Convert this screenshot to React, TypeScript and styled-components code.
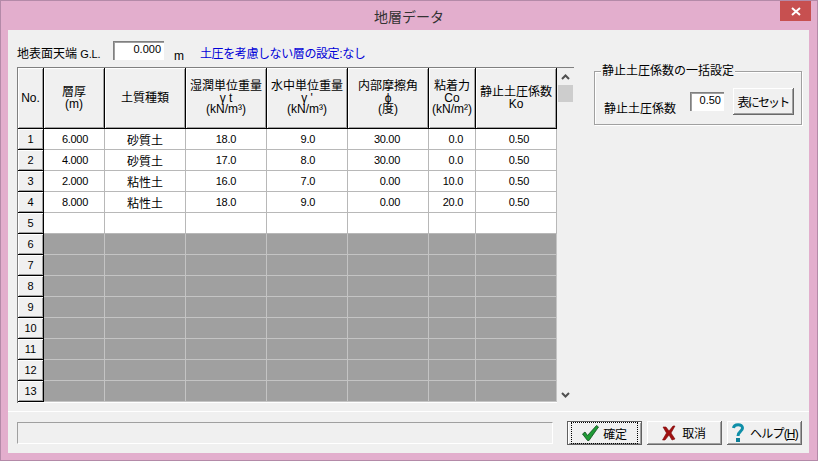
import { FC, Fragment } from 'react'
import styled, { createGlobalStyle } from 'styled-components'

const FONT = `"Liberation Sans", "Noto Sans CJK JP", sans-serif`

type Column = {
  width: number
  title: string[]
  alignRight?: number
}

const COLUMNS: Column[] = [
  { width: 61, title: ['層厚', '(m)'], alignRight: 16 },
  { width: 81, title: ['土質種類'] },
  { width: 81, title: ['湿潤単位重量', 'γ t', '(kN/m³)'], alignRight: 30 },
  { width: 81, title: ['水中単位重量', "γ '", '(kN/m³)'], alignRight: 32 },
  { width: 81, title: ['内部摩擦角', 'ϕ', '(度)'], alignRight: 28 },
  { width: 47, title: ['粘着力', 'Co', '(kN/m²)'], alignRight: 12 },
  { width: 81, title: ['静止土圧係数', 'Ko'], alignRight: 27 },
]

const ROWS: string[][] = [
  ['6.000', '砂質土', '18.0', '9.0', '30.00', '0.0', '0.50'],
  ['4.000', '砂質土', '17.0', '8.0', '30.00', '0.0', '0.50'],
  ['2.000', '粘性土', '16.0', '7.0', '0.00', '10.0', '0.50'],
  ['8.000', '粘性土', '18.0', '9.0', '0.00', '20.0', '0.50'],
  ['', '', '', '', '', '', ''],
]

const TOTAL_ROWS = 13

const CheckIcon: FC = () => (
  <svg width="17" height="16" viewBox="0 0 17 16">
    <path d="M0.5 9l2.5-2 2.5 3.5L14.5 0.5l2 1.5-9.5 13.5H5.5z" fill="#1f9a35" stroke="#0c4a1a" strokeWidth="0.8" />
  </svg>
)

const CrossIcon: FC = () => (
  <svg width="14" height="16" viewBox="0 0 14 16">
    <path d="M1 2h3l3 4 4-5h2l-4 7 4 6-3 1-3-5-4 5H0.5l4-7z" fill="#a01010" stroke="#7c0808" strokeWidth="0.6" />
  </svg>
)

const HelpIcon: FC = () => (
  <svg width="12" height="19" viewBox="0 0 12 19">
    <path d="M1.5 5C2 0.5 10.5 0.5 10.5 5c0 3.5-4.5 3.5-4.5 8" fill="none" stroke="#0f8fa8" strokeWidth="3" />
    <rect x="4" y="15" width="4" height="4" fill="#0f7f98" />
  </svg>
)

const App: FC = () => (
  <Window>
    <GlobalStyle />
    <TitleBar>
      地層データ
      <CloseButton>
        <svg width="10" height="9" viewBox="0 0 10 9">
          <path d="M1 1l8 7M9 1l-8 7" stroke="#fff" strokeWidth="2" />
        </svg>
      </CloseButton>
    </TitleBar>
    <Client>
      <TopRow>
        <TopLabel>
          地表面天端 <SmallLatin>G.L.</SmallLatin>
        </TopLabel>
        <TopInput>0.000</TopInput>
        <Unit>m</Unit>
        <Notice>土圧を考慮しない層の設定:なし</Notice>
      </TopRow>
      <Body>
        <GridFrame>
          <Grid>
            <NoHeader>No.</NoHeader>
            {COLUMNS.map((c) => (
              <HeaderCell key={c.title[0]} $width={c.width}>
                <HeaderText>
                  {c.title.map((t, i) => (
                    <Fragment key={t}>
                      {i > 0 && <br />}
                      {t}
                    </Fragment>
                  ))}
                </HeaderText>
              </HeaderCell>
            ))}
            {Array.from({ length: TOTAL_ROWS }, (_, r) => (
              <Row key={r}>
                <RowNo>{r + 1}</RowNo>
                {COLUMNS.map((c, i) => (
                  <Cell
                    key={c.title[0]}
                    $width={c.width}
                    $disabled={r >= ROWS.length}
                    $right={c.alignRight}
                  >
                    {ROWS[r]?.[i]}
                  </Cell>
                ))}
              </Row>
            ))}
          </Grid>
          <ScrollBar>
            <ScrollButton>
              <svg width="9" height="6" viewBox="0 0 9 6">
                <path d="M1 5l3.5-3.5L8 5" fill="none" stroke="#505050" strokeWidth="2" />
              </svg>
            </ScrollButton>
            <ScrollThumb />
            <ScrollTrack />
            <ScrollButton>
              <svg width="9" height="6" viewBox="0 0 9 6">
                <path d="M1 1l3.5 3.5L8 1" fill="none" stroke="#505050" strokeWidth="2" />
              </svg>
            </ScrollButton>
          </ScrollBar>
        </GridFrame>
        <GroupBox>
          <GroupLegend>静止土圧係数の一括設定</GroupLegend>
          <GroupLabel>静止土圧係数</GroupLabel>
          <GroupInput>0.50</GroupInput>
          <SetButton>表にセット</SetButton>
        </GroupBox>
      </Body>
      <Footer>
        <StatusBox />
        <Buttons>
          <Button $focused>
            <FocusRing>
              <CheckIcon />
              <ButtonText>確定</ButtonText>
            </FocusRing>
          </Button>
          <Button>
            <CrossIcon />
            <ButtonText>取消</ButtonText>
          </Button>
          <Button>
            <HelpIcon />
            <HelpText>
              ヘルプ(<u>H</u>)
            </HelpText>
          </Button>
        </Buttons>
      </Footer>
    </Client>
  </Window>
)

const GlobalStyle = createGlobalStyle`
  html, body {
    margin: 0;
    padding: 0;
    background: #e3aecd;
  }
  * {
    box-sizing: border-box;
  }
`

const Window = styled.div`
  display: flex;
  flex-direction: column;
  width: 818px;
  height: 461px;
  background: #e3aecd;
  border: 1px solid #b48aa8;
  font-family: ${FONT};
  font-size: 12px;
  color: #000;
`

const TitleBar = styled.div`
  position: relative;
  height: 29px;
  flex: none;
  display: flex;
  align-items: center;
  justify-content: center;
  font-size: 14px;
  color: #333;
`

const CloseButton = styled.div`
  position: absolute;
  top: 0;
  right: 6px;
  width: 31px;
  height: 20px;
  display: flex;
  align-items: center;
  justify-content: center;
  background: #c75050;
`

const Client = styled.div`
  flex: 1;
  margin: 0 8px 7px 7px;
  display: flex;
  flex-direction: column;
  background: #f0f0f0;
  padding: 10px 7px 8px 9px;
`

const TopRow = styled.div`
  display: flex;
  align-items: center;
  height: 20px;
`

const TopLabel = styled.span`
  width: 96px;
  padding-top: 5px;
  white-space: nowrap;
`

const SmallLatin = styled.span`
  font-size: 11px;
  letter-spacing: -0.2px;
`

const TopInput = styled.div`
  width: 51px;
  height: 19px;
  background: #fff;
  border-top: 1px solid #808080;
  border-left: 1px solid #808080;
  box-shadow: inset 1px 1px 0 #a0a0a0;
  font-size: 11px;
  text-align: right;
  padding: 1px 3px 0 0;
`

const Unit = styled.span`
  margin-left: 10px;
  padding-top: 11px;
  font-size: 12px;
`

const Notice = styled.span`
  margin-left: 16px;
  padding-top: 4px;
  color: #0000d8;
  letter-spacing: -0.4px;
`

const Body = styled.div`
  display: flex;
  align-items: flex-start;
  margin-top: 7px;
`

const GridFrame = styled.div`
  display: flex;
  width: 557px;
  height: 336px;
  overflow: hidden;
  background: #fff;
  border-top: 1px solid #808080;
  border-left: 1px solid #808080;
`

const Grid = styled.div`
  width: 539px;
  display: flex;
  flex-wrap: wrap;
  align-content: flex-start;
  background: #fff;
`

const NoHeader = styled.div`
  width: 26px;
  height: 61px;
  display: flex;
  align-items: center;
  justify-content: center;
  background: #f0f0f0;
  border-right: 1px solid #000;
  border-bottom: 1px solid #000;
  box-shadow: inset 1px 1px 0 #fff, inset -1px -1px 0 #a0a0a0;
`

const HeaderCell = styled.div<{ $width: number }>`
  width: ${(p) => p.$width}px;
  height: 61px;
  display: flex;
  justify-content: center;
  align-items: center;
  background: #f0f0f0;
  border-right: 1px solid #000;
  border-bottom: 1px solid #000;
  box-shadow: inset 1px 1px 0 #fff, inset -1px -1px 0 #a0a0a0;
  padding-top: 1px;
`

const HeaderText = styled.div`
  line-height: 11.6px;
  text-align: center;
  white-space: nowrap;
  font-size: 12px;
`

const Row = styled.div`
  display: flex;
  width: 100%;
  height: 21px;
`

const RowNo = styled.div`
  width: 26px;
  height: 21px;
  display: flex;
  align-items: center;
  justify-content: center;
  background: #f0f0f0;
  border-right: 1px solid #000;
  border-bottom: 1px solid #000;
  box-shadow: inset 1px 1px 0 #fff, inset -1px -1px 0 #a0a0a0;
  font-size: 11px;
`

const Cell = styled.div<{ $width: number; $disabled: boolean; $right?: number }>`
  width: ${(p) => p.$width}px;
  height: 21px;
  display: flex;
  align-items: center;
  justify-content: ${(p) => (p.$right ? 'flex-end' : 'center')};
  padding-right: ${(p) => p.$right ?? 0}px;
  background: ${(p) => (p.$disabled ? '#a0a0a0' : '#fff')};
  border-right: 1px solid ${(p) => (p.$disabled ? '#c4c4c4' : '#b8b8b8')};
  border-bottom: 1px solid ${(p) => (p.$disabled ? '#c4c4c4' : '#b8b8b8')};
  font-size: ${(p) => (p.$right ? 11 : 12)}px;
  letter-spacing: ${(p) => (p.$right ? -0.3 : 0)}px;
  white-space: nowrap;
`

const ScrollBar = styled.div`
  width: 17px;
  display: flex;
  flex-direction: column;
  background: #f0f0f0;
`

const ScrollButton = styled.div`
  height: 17px;
  flex: none;
  display: flex;
  align-items: center;
  justify-content: center;
`

const ScrollThumb = styled.div`
  height: 17px;
  flex: none;
  margin: 0 1px;
  background: #cdcdcd;
`

const ScrollTrack = styled.div`
  flex: 1;
`

const GroupBox = styled.div`
  position: relative;
  width: 208px;
  height: 54px;
  margin: 4px 0 0 20px;
  display: flex;
  align-items: center;
  border: 1px solid #a0a0a0;
  box-shadow: inset 1px 1px 0 #fff, 1px 1px 0 #fff;
  padding: 7px 0 0 9px;
`

const GroupLegend = styled.div`
  position: absolute;
  top: -8px;
  left: 6px;
  background: #f0f0f0;
  padding: 0 1px;
  line-height: 14px;
`

const GroupLabel = styled.span`
  width: 86px;
  padding-top: 12px;
`

const GroupInput = styled.div`
  width: 34px;
  height: 19px;
  background: #fff;
  border-top: 1px solid #808080;
  border-left: 1px solid #808080;
  box-shadow: inset 1px 1px 0 #a0a0a0;
  font-size: 11px;
  text-align: right;
  padding: 1px 3px 0 0;
`

const SetButton = styled.div`
  width: 61px;
  height: 27px;
  margin-left: 9px;
  display: flex;
  align-items: center;
  justify-content: center;
  background: #f0f0f0;
  border-right: 1px solid #696969;
  border-bottom: 1px solid #696969;
  box-shadow: inset 1px 1px 0 #fff, inset -1px -1px 0 #a0a0a0;
  letter-spacing: -1.8px;
`

const Footer = styled.div`
  flex: 1;
  display: flex;
  align-items: flex-end;
  justify-content: space-between;
  margin: 8px -7px 0 -9px;
  padding: 0 7px 0 9px;
  border-top: 1px solid #fff;
`

const StatusBox = styled.div`
  width: 536px;
  height: 22px;
  margin-bottom: 1px;
  border-top: 1px solid #a0a0a0;
  border-left: 1px solid #a0a0a0;
  border-right: 1px solid #fff;
  border-bottom: 1px solid #fff;
`

const Buttons = styled.div`
  display: flex;
  gap: 5px;
`

const Button = styled.div<{ $focused?: boolean }>`
  width: 75px;
  height: 24px;
  display: flex;
  align-items: center;
  justify-content: center;
  gap: 6px;
  background: #f0f0f0;
  border: ${(p) => (p.$focused ? '1px solid #606060' : '0 solid #696969')};
  border-right-width: 1px;
  border-bottom-width: 1px;
  box-shadow: inset 1px 1px 0 #fff, inset -1px -1px 0 #a0a0a0;
  white-space: nowrap;
`

const FocusRing = styled.div`
  width: 100%;
  height: 100%;
  margin: 3px;
  display: flex;
  align-items: center;
  justify-content: center;
  gap: 4px;
  border: 1px dotted #000;
`

const ButtonText = styled.span`
  letter-spacing: -0.2px;
`

const HelpText = styled.span`
  letter-spacing: -0.8px;
  margin-right: -2px;
`

export default App
